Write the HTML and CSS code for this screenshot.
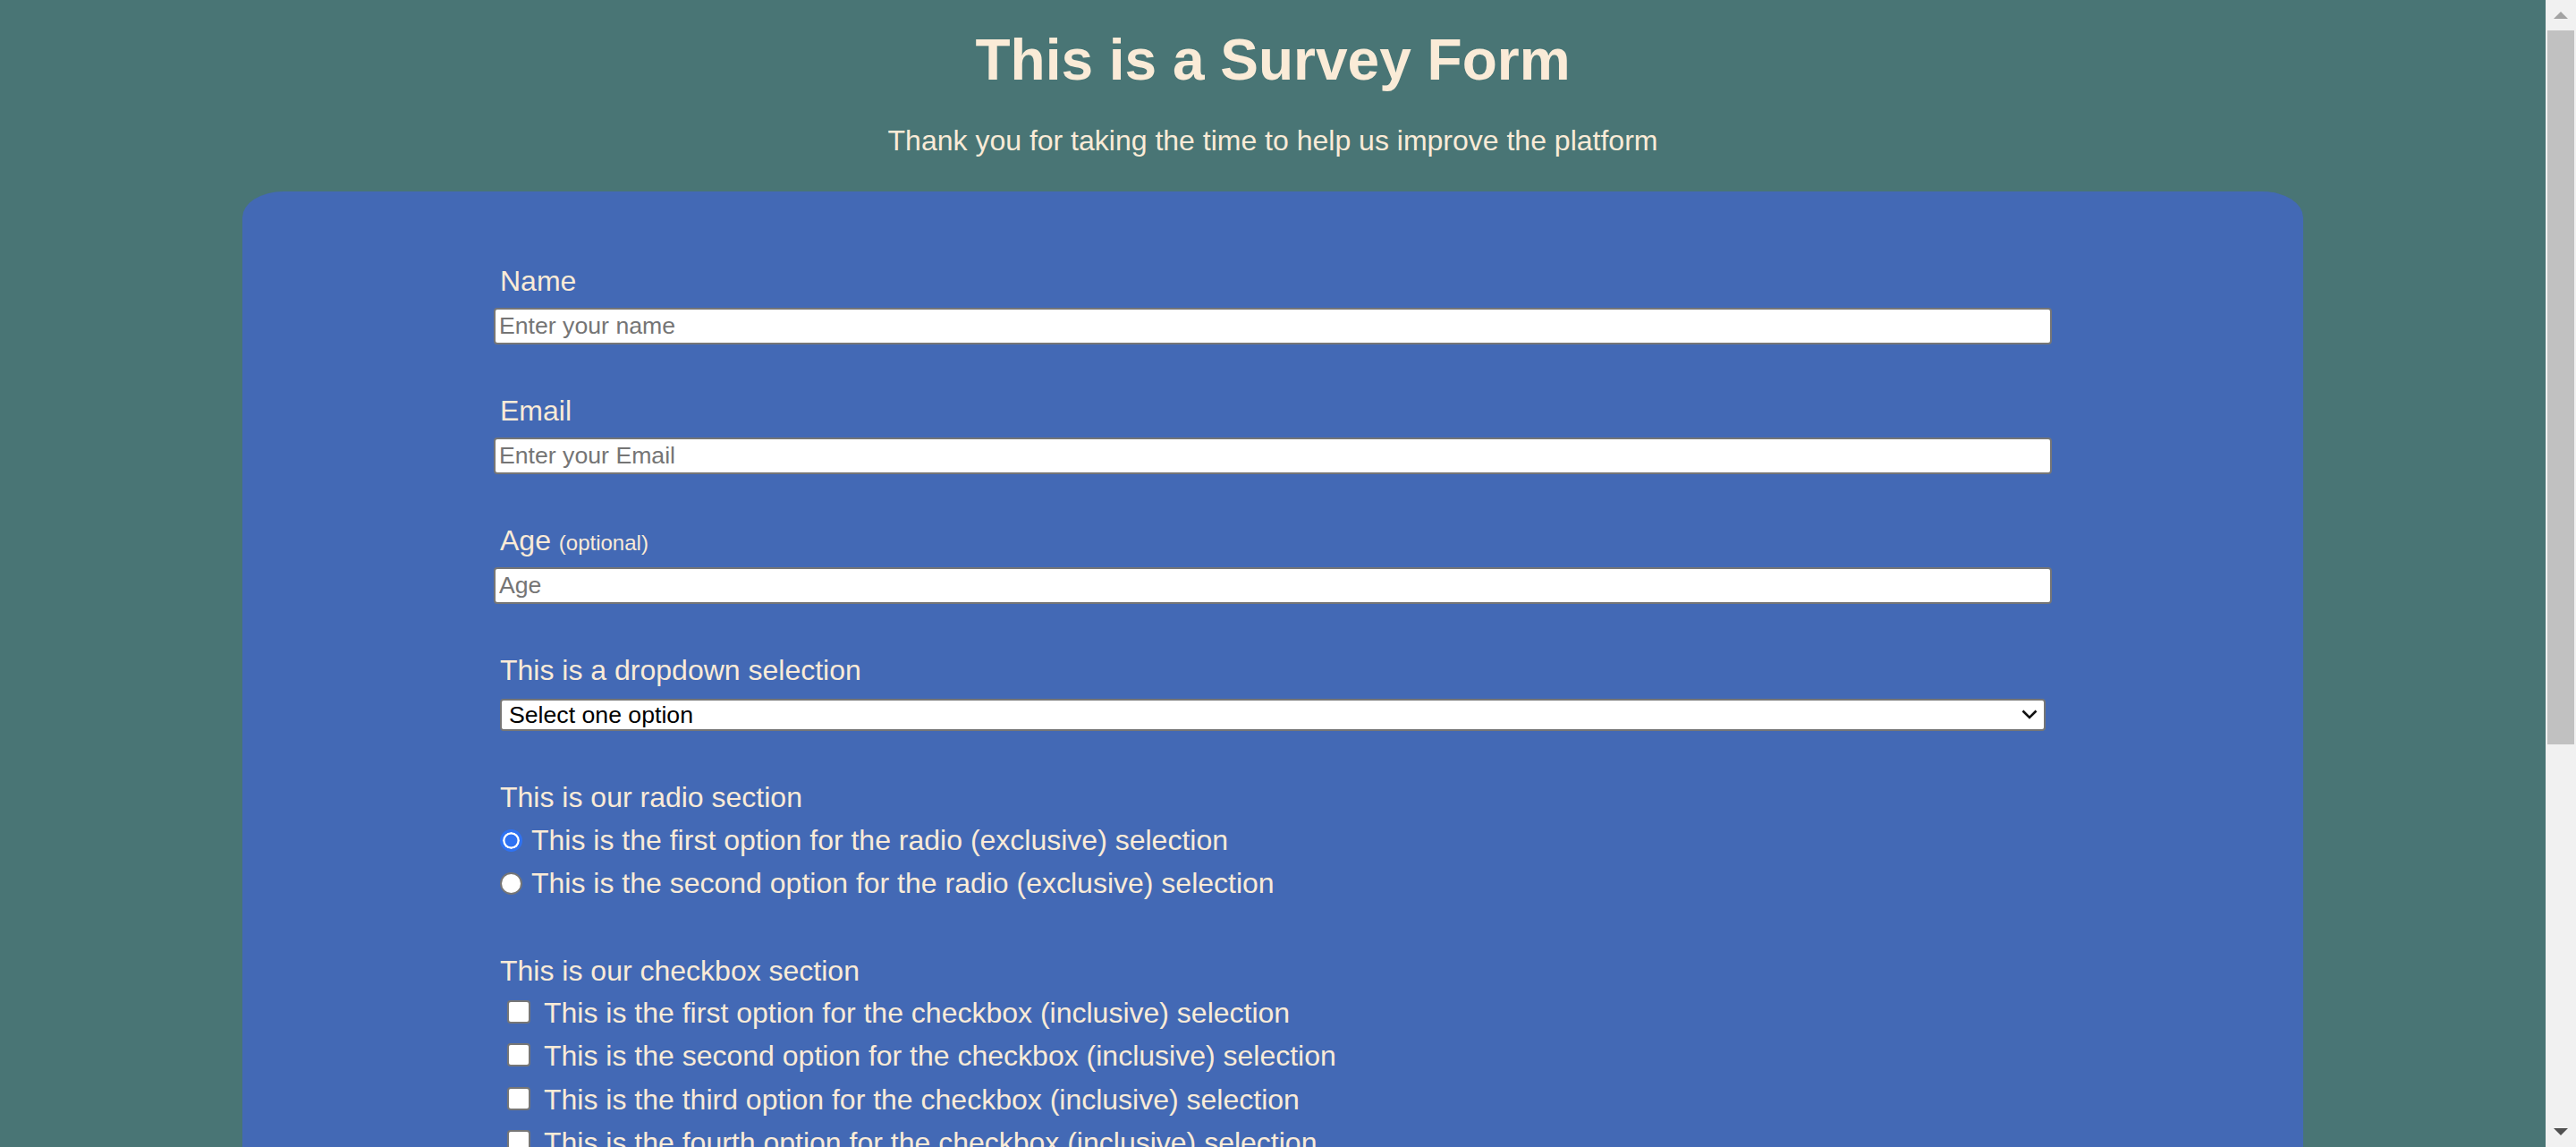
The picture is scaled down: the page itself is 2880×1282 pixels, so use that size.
FILE: index.html
```html
<!DOCTYPE html>
<html lang="en">
<head>
<meta charset="utf-8">
<title>Survey Form</title>
<link rel="stylesheet" href="styles.css">
</head>
<body class="page">
  <main class="viewport">
    <header class="page-header">
      <h1 class="title" id="title">This is a Survey Form</h1>
      <p class="description" id="description">Thank you for taking the time to help us improve the platform</p>
    </header>

    <form class="survey" id="survey-form">
      <div class="field">
        <label class="field-label" for="name">Name</label>
        <input class="text-input" id="name" type="text" placeholder="Enter your name">
      </div>

      <div class="field">
        <label class="field-label" for="email">Email</label>
        <input class="text-input" id="email" type="email" placeholder="Enter your Email">
      </div>

      <div class="field">
        <label class="field-label" for="number">Age <span class="hint">(optional)</span></label>
        <input class="text-input" id="number" type="text" placeholder="Age">
      </div>

      <div class="field">
        <label class="field-label field-label-select" for="dropdown">This is a dropdown selection</label>
        <div class="select-wrap">
          <select class="select" id="dropdown">
            <option>Select one option</option>
            <option>First option</option>
            <option>Second option</option>
          </select>
          <svg class="select-arrow" viewBox="0 0 18 11" aria-hidden="true"><path d="M1.5 1.5 L9 9 L16.5 1.5" fill="none" stroke="#111" stroke-width="2.6"/></svg>
        </div>
      </div>

      <div class="field">
        <p class="field-label">This is our radio section</p>
        <div class="options">
          <label class="option"><input class="radio" type="radio" name="choice" checked><span class="option-text">This is the first option for the radio (exclusive) selection</span></label>
          <label class="option"><input class="radio" type="radio" name="choice"><span class="option-text">This is the second option for the radio (exclusive) selection</span></label>
        </div>
      </div>

      <div class="field">
        <p class="field-label">This is our checkbox section</p>
        <div class="options options-check">
          <label class="option option-check"><input class="checkbox" type="checkbox"><span class="option-text">This is the first option for the checkbox (inclusive) selection</span></label>
          <label class="option option-check"><input class="checkbox" type="checkbox"><span class="option-text">This is the second option for the checkbox (inclusive) selection</span></label>
          <label class="option option-check"><input class="checkbox" type="checkbox"><span class="option-text">This is the third option for the checkbox (inclusive) selection</span></label>
          <label class="option option-check"><input class="checkbox" type="checkbox"><span class="option-text">This is the fourth option for the checkbox (inclusive) selection</span></label>
        </div>
      </div>

      <div class="field">
        <label class="field-label" for="comments">Any comments or suggestions?</label>
        <textarea class="textarea" id="comments" placeholder="Enter your comment here..."></textarea>
      </div>

      <div class="actions">
        <button class="submit" type="submit">Submit</button>
      </div>
    </form>
  </main>

  <div class="scrollbar" aria-hidden="true">
    <div class="scroll-btn">
      <svg class="scroll-arrow" viewBox="0 0 16 8"><polygon points="0,8 8,0 16,8" fill="#a3a3a3"/></svg>
    </div>
    <div class="scroll-thumb"></div>
    <div class="scroll-track"></div>
    <div class="scroll-btn">
      <svg class="scroll-arrow" viewBox="0 0 16 8"><polygon points="0,0 16,0 8,8" fill="#505050"/></svg>
    </div>
  </div>
</body>
</html>
```

FILE: styles.css
```css
html {
  height: 100%;
  overflow: hidden;
  background: #497575;
}

.page {
  display: flex;
  height: 100%;
  margin: 0;
  overflow: hidden;
  background: #497575;
  color: #faebd7;
  font-family: "Liberation Sans", Arial, sans-serif;
  font-size: 32px;
}

.viewport {
  flex: 1;
  min-width: 0;
  overflow: hidden;
}

/* browser scrollbar strip */
.scrollbar {
  display: flex;
  flex: none;
  flex-direction: column;
  width: 34px;
  background: #f1f1f1;
}

.scroll-btn {
  display: flex;
  flex: none;
  align-items: center;
  justify-content: center;
  height: 34px;
}

.scroll-arrow {
  width: 16px;
  height: 8px;
}

.scroll-thumb {
  flex: none;
  height: 798px;
  margin: 0 2px;
  background: #c1c1c1;
}

.scroll-track {
  flex: 1;
}

.page-header {
  text-align: center;
}

.title {
  margin: 30px 0 0;
  font-size: 64px;
  font-weight: bold;
  line-height: 74px;
}

.description {
  margin: 29px 0 0;
  font-size: 32px;
  line-height: 48px;
}

.survey {
  box-sizing: border-box;
  width: 2304px;
  margin: 33px auto 0;
  padding: 76px 288px 80px;
  background: #4369b5;
  border-radius: 46px / 29px;
}

.field {
  margin-bottom: 50px;
}

.field-label {
  display: block;
  margin: 0 0 6px;
  font-size: 32px;
  line-height: 48px;
}

p.field-label {
  margin-bottom: 0;
}

.field-label-select {
  margin-bottom: 8px;
}

.hint {
  font-size: 24px;
  line-height: 1;
}

.text-input {
  display: block;
  box-sizing: border-box;
  width: calc(100% + 14px);
  height: 41px;
  margin: 0 0 0 -7px;
  padding: 0 4px;
  border: 2px solid #767676;
  border-radius: 4px;
  background: #fff;
  color: #000;
  font-family: "Liberation Sans", Arial, sans-serif;
  font-size: 26.67px;
}

.text-input::placeholder,
.textarea::placeholder {
  color: #757575;
}

.select-wrap {
  position: relative;
}

.select {
  display: block;
  box-sizing: border-box;
  width: 100%;
  height: 36px;
  margin: 0;
  padding: 0 40px 0 8px;
  border: 2px solid #767676;
  border-radius: 4px;
  background: #fff;
  color: #000;
  font-family: "Liberation Sans", Arial, sans-serif;
  font-size: 26.67px;
  appearance: none;
  -webkit-appearance: none;
}

.select-arrow {
  position: absolute;
  top: 12px;
  right: 9px;
  width: 18px;
  height: 11px;
  pointer-events: none;
}

.options-check {
  margin-top: -1.5px;
}

.option {
  display: flex;
  align-items: center;
  height: 48px;
  line-height: 48px;
}

.option-check {
  height: 48.5px;
}

.option-text {
  white-space: nowrap;
}

.radio {
  appearance: none;
  -webkit-appearance: none;
  box-sizing: border-box;
  flex: none;
  width: 25px;
  height: 25px;
  margin: 0 10px 0 0;
  border: 2px solid #767676;
  border-radius: 50%;
  background: #fff;
}

.radio:checked {
  border: 3px solid #2f72f2;
  background: #2f72f2;
  box-shadow: inset 0 0 0 2.5px #fff;
}

.checkbox {
  appearance: none;
  -webkit-appearance: none;
  box-sizing: border-box;
  flex: none;
  width: 26px;
  height: 26px;
  margin: 0 15px 2px 8px;
  border: 2px solid #767676;
  border-radius: 4px;
  background: #fff;
}

.textarea {
  display: block;
  box-sizing: border-box;
  width: calc(100% + 14px);
  height: 300px;
  margin: 0 0 0 -7px;
  padding: 4px;
  border: 2px solid #767676;
  border-radius: 4px;
  font-family: "Liberation Sans", Arial, sans-serif;
  font-size: 26.67px;
  resize: vertical;
}

.actions {
  display: flex;
  justify-content: center;
}

.submit {
  padding: 12px 48px;
  border: 2px solid #767676;
  border-radius: 8px;
  background: #faebd7;
  color: #000;
  font-family: "Liberation Sans", Arial, sans-serif;
  font-size: 32px;
}
```
